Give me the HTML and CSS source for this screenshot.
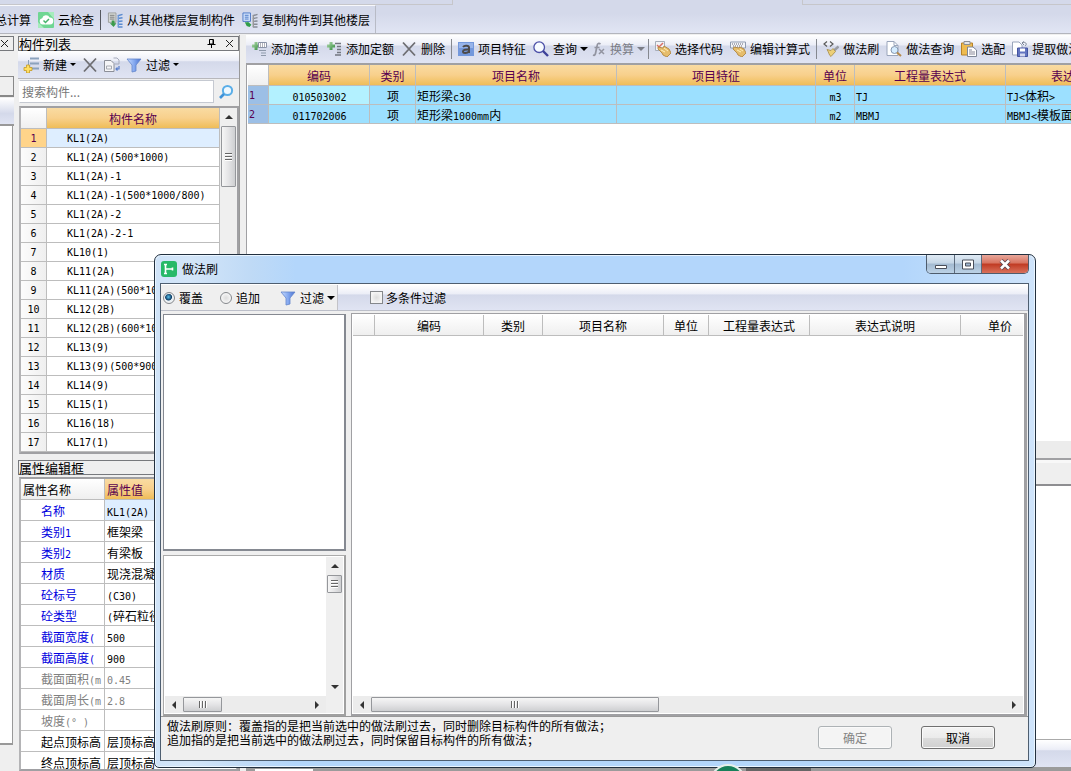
FILE: index.html
```html
<!DOCTYPE html>
<html lang="zh-CN">
<head>
<meta charset="utf-8">
<title>做法刷</title>
<link rel="stylesheet" href="styles.css">
</head>
<body>
<svg class="defs" aria-hidden="true">
  <defs>
    <linearGradient id="gFun" x1="0" x2="1"><stop offset="0" stop-color="#c9dcff"/><stop offset=".5" stop-color="#86aaf0"/><stop offset="1" stop-color="#4a72d0"/></linearGradient>
    <linearGradient id="gPlus" x1="0" x2="1" y2="1"><stop offset="0" stop-color="#b5dcb0"/><stop offset="1" stop-color="#2f8a3a"/></linearGradient>
    <symbol id="i-cloud" viewBox="0 0 16 16"><rect width="16" height="16" rx="1" fill="#6fd693"/><path d="M0 10L6 16H0zM10 0h6v7z" fill="#a6ecbd"/><path d="M4.500 12.500a3.200 3.200 0 0 1-.3-6.300A4 4 0 0 1 11.600 5.500a3.500 3.500 0 0 1 .4 7z" fill="#fff"/><path d="M5.500 8.500l2 2 3.500-3.500" fill="none" stroke="#45b36b" stroke-width="1.500"/></symbol>
    <symbol id="i-copyfrom" viewBox="0 0 17 17"><path d="M1.500 1h8v10h-8z" fill="#d9dcd9" stroke="#9a9d9a"/><path d="M3 3.500h5M3 5.500h5M3 7.500h5" stroke="#777"/><path d="M5 9v3H3l4 4 3-4H8V9z" fill="#3b9b4b"/><path d="M11.500 4l5-1.500M11.500 7l5-1M11.500 10l5-.5M11.500 13h5M11.500 16h5" stroke="#5a8bd0" stroke-width="1.600"/><path d="M12 3.500v12.500" stroke="#6f9bd8" stroke-width="1.500"/></symbol>
    <symbol id="i-copyto" viewBox="0 0 17 17"><path d="M1 1h8v9H1z" fill="#cfe0fa" stroke="#4b79c7"/><path d="M3 3.500h4M3 5.500h4M3 7.500h4" stroke="#4b79c7"/><path d="M3 11h3v-1l4 3.500L8 16l-3-1z" fill="#2f9d49"/><path d="M11.500 4l5-1.500M11.500 7l5-1M11.500 10l5-.5M11.500 13h5M11.500 16h5" stroke="#878c96" stroke-width="1.500"/><path d="M12 3.500v12.500" stroke="#999" stroke-width="1.500"/></symbol>
    <symbol id="i-new" viewBox="0 0 16 16"><path d="M7 1.500h9M7 6.500h9M7 11.500h9" stroke="#8ba2bd" stroke-width="2"/><path d="M5.500 3v6h2" fill="none" stroke="#8ba2bd"/><path d="M3.500 8h3v2.500H9v3H6.500V16h-3v-2.500H1v-3h2.500z" fill="#ffdf62" stroke="#c59a24" stroke-width=".8"/></symbol>
    <symbol id="i-x" viewBox="0 0 16 16"><path d="M2 1.500l12 13M14 1.500l-12 13" stroke="#6e6e72" stroke-width="1.800"/></symbol>
    <symbol id="i-copy" viewBox="0 0 16 16"><path d="M.5 3.500H7l3 3v8H.5z" fill="#f5f5f7" stroke="#8c8f98"/><path d="M2.500 9h5v3h-5z" fill="none" stroke="#a7aab2"/><path d="M9.500 1H13l2 2v4h-4" fill="none" stroke="#a5aabb"/><path d="M15 9v3h-3M13.500 10.500L12 12l1.500 1.500" fill="none" stroke="#587dca" stroke-width="1.200"/></symbol>
    <symbol id="i-filter" viewBox="0 0 16 16"><path d="M1 2h14l-5 6v6l-4 1V8z" fill="url(#gFun)" stroke="#6285cc" stroke-width=".8"/></symbol>
    <symbol id="i-find" viewBox="0 0 16 16"><circle cx="9.500" cy="6.500" r="4.600" fill="#eef8ff" stroke="#5aaee8" stroke-width="2"/><path d="M6 10L2 14" stroke="#3f92d8" stroke-width="2.600"/></symbol>
    <symbol id="i-addlist" viewBox="0 0 16 16"><path d="M3.500 1h3v2.500H9v3H6.500V9h-3V6.500H1v-3h2.500z" fill="url(#gPlus)"/><path d="M7.500 1.500h8v5h-8z" fill="#fff" stroke="#8a93a8"/><path d="M9 3h1M11 3h1M13 3h1M9 5h1M11 5h1M13 5h1" stroke="#667"/><path d="M8 9.500h7M10 12h5M10 14.500h5" stroke="#8e99aa" stroke-width="1.200"/></symbol>
    <symbol id="i-addquota" viewBox="0 0 16 16"><path d="M3.500 1h3v2.500H9v3H6.500V9h-3V6.500H1v-3h2.500z" fill="url(#gPlus)"/><path d="M9 2.500h6M11 5.500h4M11 8.500h4M11 11.500h4M9 14h6" stroke="#737780" stroke-width="1.300"/></symbol>
    <symbol id="i-feature" viewBox="0 0 16 16"><path d="M0 1h16v14H0z" fill="#7398dc"/><path d="M1 2h14v5H1z" fill="#97b4ea"/><path d="M5 6c1.500-2 6-1.500 6 .5V12M11 8.500c-3-.3-6 .2-6 2 0 2 4 2 6 0" fill="none" stroke="#4d4a4a" stroke-width="2"/></symbol>
    <symbol id="i-query" viewBox="0 0 16 16"><circle cx="6.200" cy="6.200" r="5.300" fill="#f7fbff" stroke="#4c50a8" stroke-width="1.300"/><path d="M10 10l5 5" stroke="#3e4299" stroke-width="2.400"/></symbol>
    <symbol id="i-fx" viewBox="0 0 14 16"><path d="M1 14c2 1 2.500-1 3-4l1-5c.5-3 2-3 3.500-2M2.500 6.500h5" fill="none" stroke="#9294a0" stroke-width="1.700"/><path d="M7 8l5 5M12 8l-5 5" stroke="#9294a0" stroke-width="1.500"/></symbol>
    <symbol id="i-pick" viewBox="0 0 16 16"><path d="M.5.5h9v9h-9z" fill="#f2f4f8" stroke="#a7adb9"/><path d="M2 4l2 2 4-4" fill="none" stroke="#d97066" stroke-width="1.500"/><path d="M3 6l5 1 1-2 5 3 2 4-4 4-4-2-1-2-4-4z" fill="#e6bd6c" stroke="#a97e35" stroke-width=".8"/><path d="M6 9l4 2M9 7l4 3" stroke="#fff0bc"/></symbol>
    <symbol id="i-editexp" viewBox="0 0 16 16"><path d="M.5 1h15v6H.5z" fill="#f2f4f8" stroke="#8f9bb0"/><path d="M2 3h1M4 3h1M6 3h1M8 3h1M10 3h1M12 3h1M3 5h1M5 5h1M7 5h1M9 5h1M11 5h1" stroke="#667"/><path d="M4 6l5 1 1-1 4 2 2 4-4 4-4-2-1-2-4-4z" fill="#e6bd6c" stroke="#a97e35" stroke-width=".8"/><path d="M7 9l4 2M10 8l3 2" stroke="#fff0bc"/></symbol>
    <symbol id="i-brush" viewBox="0 0 16 16"><path d="M4 .5L1 3 4 5.500M7 .5L10 3 7 5.500" fill="none" stroke="#5a5a5a" stroke-width="1.200"/><path d="M15.500 5.500L11 9.500" stroke="#9a9da5" stroke-width="2.500"/><path d="M4 8.500l4 1 2-2 2.500 3L8 15.500c-2-1-2-4-4-7z" fill="#eccf78" stroke="#a58a45" stroke-width=".8"/></symbol>
    <symbol id="i-docfind" viewBox="0 0 16 16"><path d="M1 .5h7l4 4v10H1z" fill="#fff" stroke="#9aa5bb"/><path d="M8 .5v4h4" fill="none" stroke="#9aa5bb"/><circle cx="8.500" cy="9" r="3.500" fill="#d5ecff" stroke="#8597b0"/><path d="M11 11.500l4 3.500" stroke="#b58a4c" stroke-width="2"/></symbol>
    <symbol id="i-paste" viewBox="0 0 16 16"><path d="M.5 2h11v12H.5z" fill="#eebb50" stroke="#b78228"/><path d="M3 .5h6v3H3z" fill="#e3e5ea" stroke="#8a8e96"/><path d="M6.500 6H12l3.500 3v6.500h-9z" fill="#fff" stroke="#7e8696"/><path d="M8 9h3M8 11h6M8 13h6" stroke="#889"/></symbol>
    <symbol id="i-extract" viewBox="0 0 16 16"><path d="M.5 1H7l3 3v10H.5z" fill="#fff" stroke="#9aa5bb"/><path d="M10 2c3-2 6 1 3 3M12 .5L10 2l2 2" fill="none" stroke="#7c8596"/><path d="M5.500 7h10v8.500h-10z" fill="#6274c0" stroke="#4353a0"/><path d="M8 7.500h5v3H8z" fill="#fff"/><path d="M8 12.500h5v3H8z" fill="#d5d9ee"/></symbol>
    <symbol id="i-app" viewBox="0 0 16 16"><rect width="16" height="16" rx="3" fill="#27b968"/><path d="M4.500 3.500v9M4.500 8H11M3 3.500h3M3 12.500h3M11.500 6.500v3" fill="none" stroke="#fff" stroke-width="1.600"/></symbol>
    <symbol id="i-close" viewBox="0 0 9 9"><path d="M1 1l7 7M8 1L1 8" stroke="#222" stroke-width="1"/></symbol>
    <symbol id="i-pin" viewBox="0 0 8 9"><path d="M2 .5h4V5H2zM0 5.500h8M4 6v3M5.500 1v4" fill="none" stroke="#000"/></symbol>
  </defs>
</svg>

<div class="app">
  <header class="ribbon">
    <div class="ribbon-top"><span class="tab-edge"></span><span class="tab-edge far"></span></div>
    <div class="ribbon-bar">
      <div class="ribbon-group">
        <button class="tool clipped">总计算</button>
        <button class="tool"><svg class="ic"><use href="#i-cloud"/></svg>云检查</button>
        <span class="sep"></span>
        <button class="tool"><svg class="ic"><use href="#i-copyfrom"/></svg>从其他楼层复制构件</button>
        <button class="tool"><svg class="ic"><use href="#i-copyto"/></svg>复制构件到其他楼层</button>
      </div>
    </div>
  </header>

  <div class="work">
    <div class="strip">
      <div class="caption"><button class="mini" aria-label="关闭"><svg><use href="#i-close"/></svg></button></div>
      <div class="strip-tab"></div>
      <div class="strip-bar"></div>
      <div class="strip-body"></div>
    </div>

    <aside class="side">
      <div class="caption"><span>构件列表</span><span class="caption-btns"><button class="mini" aria-label="固定"><svg><use href="#i-pin"/></svg></button><button class="mini" aria-label="关闭"><svg><use href="#i-close"/></svg></button></span></div>
      <div class="toolbar side-tools">
        <button class="tool">
          <svg class="ic"><use href="#i-new"/></svg>新建<i class="arrow small"></i></button>
        <button class="tool" aria-label="删除"><svg class="ic"><use href="#i-x"/></svg></button>
        <button class="tool" aria-label="复制"><svg class="ic"><use href="#i-copy"/></svg></button>
        <button class="tool"><svg class="ic"><use href="#i-filter"/></svg>过滤<i class="arrow small"></i></button>
      </div>
      <div class="search"><input type="text" placeholder="搜索构件..." aria-label="搜索构件"><button class="tool" aria-label="搜索"><svg class="ic"><use href="#i-find"/></svg></button></div>
      <div class="listbox">
        <table class="grid parts">
          <colgroup><col class="w26"><col></colgroup>
          <thead><tr><th class="corner"></th><th class="gold">构件名称</th></tr></thead>
          <tbody class="m">
            <tr class="sel"><th>1</th><td>KL1(2A)</td></tr>
            <tr><th>2</th><td>KL1(2A)(500*1000)</td></tr>
            <tr><th>3</th><td>KL1(2A)-1</td></tr>
            <tr><th>4</th><td>KL1(2A)-1(500*1000/800)</td></tr>
            <tr><th>5</th><td>KL1(2A)-2</td></tr>
            <tr><th>6</th><td>KL1(2A)-2-1</td></tr>
            <tr><th>7</th><td>KL10(1)</td></tr>
            <tr><th>8</th><td>KL11(2A)</td></tr>
            <tr><th>9</th><td>KL11(2A)(500*1000)</td></tr>
            <tr><th>10</th><td>KL12(2B)</td></tr>
            <tr><th>11</th><td>KL12(2B)(600*1000)</td></tr>
            <tr><th>12</th><td>KL13(9)</td></tr>
            <tr><th>13</th><td>KL13(9)(500*900)</td></tr>
            <tr><th>14</th><td>KL14(9)</td></tr>
            <tr><th>15</th><td>KL15(1)</td></tr>
            <tr><th>16</th><td>KL16(18)</td></tr>
            <tr><th>17</th><td>KL17(1)</td></tr>
          </tbody>
        </table>
        <div class="vscroll"><i class="au"></i><span class="thumb tall"><i class="grip"></i></span></div>
      </div>
      <div class="caption props-caption"><span>属性编辑框</span></div>
      <div class="listbox props-box">
        <table class="grid props">
          <colgroup><col class="w84"><col></colgroup>
          <thead><tr><th class="corner">属性名称</th><th class="gold">属性值</th></tr></thead>
          <tbody>
            <tr class="sel"><th>名称</th><td><span class="m">KL1(2A)</span></td></tr>
            <tr><th>类别<span class="m">1</span></th><td>框架梁</td></tr>
            <tr><th>类别<span class="m">2</span></th><td>有梁板</td></tr>
            <tr><th>材质</th><td>现浇混凝土</td></tr>
            <tr><th>砼标号</th><td><span class="m">(C30)</span></td></tr>
            <tr><th>砼类型</th><td><span class="m">(</span>碎石粒径</td></tr>
            <tr><th>截面宽度<span class="m">(</span></th><td><span class="m">500</span></td></tr>
            <tr><th>截面高度<span class="m">(</span></th><td><span class="m">900</span></td></tr>
            <tr class="dim"><th>截面面积<span class="m">(m</span></th><td><span class="m">0.45</span></td></tr>
            <tr class="dim"><th>截面周长<span class="m">(m</span></th><td><span class="m">2.8</span></td></tr>
            <tr class="dim"><th>坡度<span class="m">(° )</span></th><td></td></tr>
            <tr class="blk"><th>起点顶标高</th><td>层顶标高</td></tr>
            <tr class="blk"><th>终点顶标高</th><td>层顶标高</td></tr>
          </tbody>
        </table>
      </div>
    </aside>

    <main class="main">
      <div class="toolbar main-tools">
        <button class="tool"><svg class="ic"><use href="#i-addlist"/></svg>添加清单</button>
        <button class="tool"><svg class="ic"><use href="#i-addquota"/></svg>添加定额</button>
        <button class="tool"><svg class="ic"><use href="#i-x"/></svg>删除</button>
        <span class="sep"></span>
        <button class="tool"><svg class="ic"><use href="#i-feature"/></svg>项目特征</button>
        <button class="tool menu"><svg class="ic"><use href="#i-query"/></svg>查询<i class="arrow"></i></button>
        <button class="tool menu" disabled><svg class="ic narrow"><use href="#i-fx"/></svg>换算<i class="arrow"></i></button>
        <span class="sep"></span>
        <button class="tool"><svg class="ic"><use href="#i-pick"/></svg>选择代码</button>
        <button class="tool"><svg class="ic"><use href="#i-editexp"/></svg>编辑计算式</button>
        <span class="sep"></span>
        <button class="tool"><svg class="ic"><use href="#i-brush"/></svg>做法刷</button>
        <button class="tool"><svg class="ic"><use href="#i-docfind"/></svg>做法查询</button>
        <button class="tool"><svg class="ic"><use href="#i-paste"/></svg>选配</button>
        <button class="tool"><svg class="ic"><use href="#i-extract"/></svg>提取做法</button>
      </div>
      <div class="sheet">
        <table class="grid works">
          <colgroup><col class="w21"><col class="w101"><col class="w46"><col class="w201"><col class="w199"><col class="w39"><col class="w151"><col class="w151"></colgroup>
          <thead><tr><th class="corner"></th><th class="gold">编码</th><th class="gold">类别</th><th class="gold">项目名称</th><th class="gold">项目特征</th><th class="gold">单位</th><th class="gold">工程量表达式</th><th class="gold">表达式说明</th></tr></thead>
          <tbody>
            <tr><th class="m">1</th><td class="mid cur"><span class="m">010503002</span></td><td class="mid">项</td><td>矩形梁<span class="m">c30</span></td><td></td><td class="mid"><span class="m">m3</span></td><td><span class="m">TJ</span></td><td><span class="m">TJ&lt;</span>体积<span class="m">&gt;</span></td></tr>
            <tr><th class="m">2</th><td class="mid"><span class="m">011702006</span></td><td class="mid">项</td><td>矩形梁<span class="m">1000mm</span>内</td><td></td><td class="mid"><span class="m">m2</span></td><td><span class="m">MBMJ</span></td><td><span class="m">MBMJ&lt;</span>模板面积<span class="m">&gt;</span></td></tr>
          </tbody>
        </table>
      </div>
      <div class="sheet-scroll"></div>
      <div class="lower-caption"></div>
      <div class="lower-body"></div>
      <div class="toolbar lower-tools"></div>
      <div class="lower-edge"><span class="edge-light"></span><span class="edge-dark"></span><span class="badge"></span></div>
    </main>
  </div>

  <section class="dialog" role="dialog" aria-labelledby="dlg-title">
    <div class="dlg-title">
      <svg class="ic"><use href="#i-app"/></svg><h1 id="dlg-title">做法刷</h1>
      <div class="win-btns">
        <button class="wb" aria-label="最小化"><svg viewBox="0 0 12 11"><path d="M.5 6.500h11v3H.5z" fill="#fff" stroke="#4a4f5a"/></svg></button>
        <button class="wb max" aria-label="最大化"><svg viewBox="0 0 12 11"><path d="M.5 1h11v9H.5z" fill="#fff" stroke="#4a4f5a"/><path d="M3.500 4h5v3h-5z" fill="#9fb6cf" stroke="#4a4f5a"/></svg></button>
        <button class="wb close" aria-label="关闭"><svg viewBox="0 0 12 11"><path d="M2 1.500l8 8M10 1.500l-8 8" stroke="#5b4450" stroke-width="4.400"/><path d="M2 1.500l8 8M10 1.500l-8 8" stroke="#fff" stroke-width="2.600"/></svg></button>
      </div>
    </div>
    <div class="client">
      <div class="dlg-tools">
        <div class="modes">
          <label><input type="radio" name="mode" checked>覆盖</label>
          <label><input type="radio" name="mode">追加</label>
          <button class="tool"><svg class="ic"><use href="#i-filter"/></svg>过滤<i class="arrow"></i></button>
        </div>
        <div class="toolbar multi"><label><input type="checkbox">多条件过滤</label></div>
      </div>
      <div class="panes">
        <div class="left-pane">
          <div class="tree"></div>
          <div class="tree lower">
            <div class="tree-space"></div>
            <div class="vscroll"><i class="au"></i><span class="thumb short"><i class="grip"></i></span><i class="ad"></i></div>
            <div class="hscroll"><i class="al"></i><span class="thumb"><i class="grip v"></i></span><i class="ar"></i></div>
            <div class="size-corner"></div>
          </div>
        </div>
        <div class="right-pane">
          <div class="table-area">
            <table class="grid result">
              <colgroup><col class="w22"><col class="w109"><col class="w59"><col class="w121"><col class="w45"><col class="w101"><col class="w151"><col class="w79"></colgroup>
              <thead><tr><th></th><th>编码</th><th>类别</th><th>项目名称</th><th>单位</th><th>工程量表达式</th><th>表达式说明</th><th>单价</th></tr></thead>
            </table>
          </div>
          <div class="hscroll"><i class="al"></i><span class="thumb wide"><i class="grip v"></i></span><i class="ar"></i></div>
        </div>
      </div>
      <footer class="dlg-foot">
        <div class="note">
          <p>做法刷原则：覆盖指的是把当前选中的做法刷过去，同时删除目标构件的所有做法；</p>
          <p>追加指的是把当前选中的做法刷过去，同时保留目标构件的所有做法；</p>
        </div>
        <div class="actions"><button class="btn" disabled>确定</button><button class="btn">取消</button></div>
      </footer>
    </div>
  </section>
</div>
</body>
</html>
```
FILE: styles.css
```css
* { box-sizing: border-box; }
body {
  margin: 0;
  background: #efefef;
  color: #000;
  font: 12px/18px "Noto Sans CJK SC", sans-serif;
}
button, input { font: inherit; color: inherit; }
button { background: none; border: 0; padding: 0; }
.defs { position: absolute; width: 0; height: 0; }
.app { position: relative; display: flex; flex-direction: column; height: 100vh; overflow: hidden; }
.m { font-family: "DejaVu Sans Mono", monospace; font-size: 10px; }

/* shared tool buttons */
.tool { display: flex; align-items: center; gap: 4px; white-space: nowrap; flex: none; }
.tool:disabled { color: #7b7d86; }
.ic { width: 16px; height: 16px; flex: none; }
.ic.narrow { width: 14px; }
.sep { width: 1px; height: 20px; background: #85888f; margin: 0 -1px; flex: none; }
.arrow { border: 4px solid transparent; border-top-color: currentColor; border-bottom: 0; margin-left: -1px; }
.arrow.small { border-width: 3px 3px 0; }
.menu { margin-right: -3px; }
.toolbar { background: linear-gradient(#ffffff, #eceef7 35%, #d4d9ea 40%, #e0e4f3); }

/* ribbon */
.ribbon { flex: none; background: #d4d9ea; border-bottom: 1px solid #b3b5bd; }
.ribbon-top { display: flex; justify-content: space-between; height: 5px; }
.tab-edge { width: 453px; border: solid #c6c6ca; border-width: 0 1px 1px 0; }
.tab-edge.far { width: 269px; border-width: 0 0 1px 1px; }
.ribbon-bar { display: flex; height: 28px; background: linear-gradient(#d4d9ea 30%, #e1e5f4); }
.ribbon-group { display: flex; align-items: center; gap: 7px; padding-right: 5px; border-right: 1px solid #b8bbc6; border-top: 1px solid #f7f8fc; }
.ribbon-group .clipped { margin-left: -5px; }
.ribbon-group .sep { background: #55585f; }

/* work area */
.work { flex: 1; display: flex; min-height: 0; padding-top: 1px; }
.caption { display: flex; align-items: center; justify-content: space-between; height: 15px; border: 1px solid #77797d; margin-top: 1px; font-size: 13px; line-height: 13px; background: #efefef; flex: none; white-space: nowrap; }
.caption-btns { display: flex; gap: 9px; padding-right: 4px; }
.mini { display: flex; }
.mini svg { width: 9px; height: 9px; }
.strip { width: 14px; display: flex; flex-direction: column; flex: none; overflow: hidden; }
.strip .caption { border-left: 0; }
.strip-tab { height: 21px; margin-top: 25px; border: solid #888; border-width: 1px 1px 2px 0; flex: none; }
.strip-bar { height: 28px; margin-top: 1px; background: linear-gradient(#fff, #d4d9ea 60%, #e0e4f3); border-bottom: 2px solid #999; flex: none; }
.strip-body { flex: 1; background: #fff; border: solid #999; border-width: 0 1px 2px 0; margin: 0 1px 26px 0; }

.side { width: 222px; margin-left: 4px; display: flex; flex-direction: column; flex: none; overflow: hidden; border-right: 1px solid #999; }
.side-tools { display: flex; align-items: center; height: 27px; padding-left: 5px; gap: 6px; flex: none; }
.search { display: flex; align-items: center; height: 26px; gap: 2px; padding: 1px 3px 1px 1px; flex: none; border-top: 1px solid #b8b8bc; }
.search input { flex: 1; min-width: 0; height: 23px; border: 1px solid #c5c9d1; border-left-color: #fff; padding: 0 2px; background: #fff; }
.search input::placeholder { color: #777; }
.search .tool { width: 20px; justify-content: center; }
.listbox { display: flex; margin-left: 1px; border: 2px solid #a0a0a3; border-left-color: #b4b4b6; background: #fff; overflow: hidden; flex: none; margin-top: 2px; }

.grid { table-layout: fixed; border-collapse: separate; border-spacing: 0; line-height: 17px; }
.grid th, .grid td { font-weight: normal; padding: 0; border: solid #bdbdbd; border-width: 0 1px 1px 0; overflow: hidden; white-space: nowrap; height: 19px; }
.grid thead th { height: 21px; }
.grid span.m { line-height: 12px; }
.gold { background: linear-gradient(#f9dba2, #f8d08c 50%, #efbd58); color: #58004f; }
.corner { background: linear-gradient(#fff, #efefef); }
.w21 { width: 21px; } .w22 { width: 22px; } .w26 { width: 26px; } .w39 { width: 39px; } .w45 { width: 45px; }
.w46 { width: 46px; } .w59 { width: 59px; } .w79 { width: 79px; } .w84 { width: 84px; } .w101 { width: 101px; }
.w109 { width: 109px; } .w121 { width: 121px; } .w151 { width: 151px; } .w199 { width: 199px; } .w201 { width: 201px; }

.parts { flex: 1; min-width: 0; }
.parts tbody th { background: linear-gradient(90deg, #fcfcfc, #efefef); }
.parts tbody td { padding-left: 20px; }
.parts .sel th { background: #ffd48a; color: #58004f; }
.sel td { background: #deeeff; }

.props-caption { margin-top: 6px; }
.props-box { flex: 1; }
.props { width: 100%; height: max-content; }
.props th, .props td { height: 21px; text-align: left; padding-left: 2px; }
.props tbody th { padding-left: 20px; color: #0000e0; }
.props .dim { color: #808080; }
.props .dim th { color: #808080; }
.props .blk th { color: #000; }

.main { flex: 1; min-width: 0; margin-left: 6px; display: flex; flex-direction: column; overflow: hidden; }
.main-tools { display: flex; align-items: center; gap: 7px; height: 28px; padding-left: 5px; flex: none; }
.sheet { border: 2px solid #a0a0a3; border-width: 2px 0 0 1px; padding-left: 1px; background: #fff; height: 378px; overflow: hidden; flex: none; }
.works { width: 909px; }
.works tbody th { background: #9cbfe6; color: #58004f; text-align: left; padding-left: 1px; }
.works tbody td { background: #9ce0ff; padding-left: 1px; }
.works tbody .cur { background: #b3f1ff; }
.works .mid { text-align: center; }
.sheet-scroll { height: 19px; border-bottom: 2px solid #a0a0a3; background: #ececec; flex: none; }
.lower-caption { height: 26px; border-bottom: 2px solid #8e8e91; border-top: 3px solid #f8f8f8; flex: none; }
.lower-body { flex: 1; background: #fff; border-bottom: 1px solid #aaa; }
.lower-tools { height: 27px; flex: none; }
.lower-edge { position: relative; height: 4px; background: #9b9b9b; flex: none; }
.edge-light { position: absolute; left: 9px; top: 2px; width: 58px; height: 2px; background: #fff; }
.edge-dark { position: absolute; left: 500px; top: 1px; width: 65px; height: 3px; background: #666; }
.badge { position: absolute; left: 464px; top: -3px; width: 36px; height: 36px; border: 2px solid #e5eee9; border-radius: 50%; background: #17805a; z-index: 3; }

/* scroll bars */
.vscroll { width: 17px; display: flex; flex-direction: column; align-items: center; background: #efefef; flex: none; }
.hscroll { height: 17px; display: flex; align-items: center; background: #ececec; flex: none; }
.thumb { display: flex; align-items: center; justify-content: center; border: 1px solid #95979b; border-radius: 1px; background: linear-gradient(90deg, #f6f6f6, #e4e4e6 50%, #cecfd1); flex: none; width: 15px; }
.hscroll .thumb { width: 39px; height: 15px; background: linear-gradient(#f6f6f6, #e4e4e6 50%, #cecfd1); }
.hscroll .thumb.wide { width: 43%; }
.thumb.tall { height: 61px; }
.thumb.short { height: 18px; }
.grip { width: 7px; height: 8px; background: repeating-linear-gradient(#666 0 1px, #fff 1px 2px, transparent 2px 3px); }
.grip.v { width: 8px; height: 7px; background: repeating-linear-gradient(90deg, #666 0 1px, #fff 1px 2px, transparent 2px 3px); }
.au, .ad { border: 4px solid transparent; margin: 7px 0; }
.au { border-top: 0; border-bottom-color: #333; }
.ad { border-bottom: 0; border-top-color: #333; margin-top: auto; }
.al, .ar { border: 4px solid transparent; margin: 0 7px; }
.al { border-left: 0; border-right-color: #333; }
.ar { border-right: 0; border-left-color: #333; margin-left: auto; }
.size-corner { background: #efefef; }

/* dialog window */
.dialog {
  position: absolute; left: 154px; top: 254px; right: 35px; bottom: 3px;
  display: flex; flex-direction: column;
  border: 1px solid #22303f; border-radius: 7px 7px 5px 5px;
  padding: 0 6px 6px 5px;
  background: linear-gradient(90deg, #cfe3f8, #d3e5f8 4%, #bfdaf6 11%, #b3d6fb 16%, #b3d6fb 85%, #cfe4fb);
  box-shadow: inset 0 0 0 1px #eaf5ff;
}
.dlg-title { display: flex; align-items: center; gap: 5px; height: 28px; padding-left: 1px; flex: none; }
.dlg-title h1 { margin: 0; font-size: 12px; font-weight: normal; flex: 1; }
.win-btns { display: flex; align-self: flex-start; height: 19px; border: 1px solid #4e5c6d; border-top: 0; border-radius: 0 0 5px 5px; overflow: hidden; }
.wb { width: 28px; display: flex; align-items: center; justify-content: center; border-right: 1px solid #5d6c7e; background: linear-gradient(#dfeaf5, #c5d6e6 45%, #a3bad1 50%, #bcd2e6); }
.wb.max { width: 27px; }
.wb svg { width: 12px; height: 11px; }
.wb.close { width: 46px; border: 0; background: linear-gradient(#e8a79b, #d8735f 45%, #c03a22 50%, #d9715c); }
.client { flex: 1; min-height: 0; display: flex; flex-direction: column; border: 1px solid #4e5e70; background: #efefef; }
.dlg-tools { display: flex; height: 27px; border-top: 1px solid #fff; border-bottom: 1px solid #bcbfc9; flex: none; }
.dlg-tools label { display: flex; align-items: center; gap: 4px; }
.dlg-tools .multi label { gap: 3px; }
.dlg-tools input { appearance: none; margin: 0; width: 12px; height: 12px; border: 1px solid #85888c; background: radial-gradient(#ddd, #fff); box-shadow: inset 0 0 0 1px #f4f4f4; }
.dlg-tools input[type="radio"] { border-radius: 50%; }
.dlg-tools input[type="radio"]:checked { background: radial-gradient(circle at 45% 40%, #5bc4f0, #0d3e66 38%, #e8eef2 48%); }
.dlg-tools input[type="checkbox"] { width: 13px; height: 13px; }
.modes { width: 177px; display: flex; align-items: center; padding-left: 2px; border-right: 1px solid #c3c3c8; }
.modes label { margin-right: 17px; }
.modes label + label { margin-right: 20px; }
.multi { flex: 1; display: flex; padding-left: 32px; }
.panes { flex: 1; min-height: 0; display: flex; gap: 5px; padding: 2px 1px 0 2px; }
.left-pane { width: 183px; display: flex; flex-direction: column; gap: 4px; padding-top: 1px; flex: none; }
.tree { flex: 3; background: #fff; border: solid #858991; border-width: 1px 2px 2px 1px; }
.tree.lower { flex: 2; display: grid; grid-template-columns: 1fr 17px; grid-template-rows: 1fr 17px; padding: 1px; border-color: #aaa #a0a0a0 #a0a0a0 #aaa; }
.right-pane { flex: 1; min-width: 0; display: flex; flex-direction: column; background: #fff; border: solid #a0a0a3; border-width: 1px 3px 2px 1px; padding: 1px; }
.table-area { flex: 1; overflow: hidden; }
.result { width: 687px; }
.result th { background: linear-gradient(#fff, #efefef); }
.dlg-foot { display: flex; justify-content: space-between; height: 44px; border-top: 1px solid #999; padding: 2px 33px 0 6px; flex: none; }
.note p { margin: 0; line-height: 14px; white-space: nowrap; }
.actions { display: flex; gap: 29px; padding-top: 7px; }
.btn { width: 74px; height: 23px; border: 1px solid #707070; border-radius: 3px; background: linear-gradient(#f4f4f4, #ebebeb 50%, #dcdcdc 52%, #d0d0d0); box-shadow: inset 0 0 0 1px #fafafa; }
.btn:disabled { color: #838383; border-color: #adb2b5; background: #f4f4f4; }
```
